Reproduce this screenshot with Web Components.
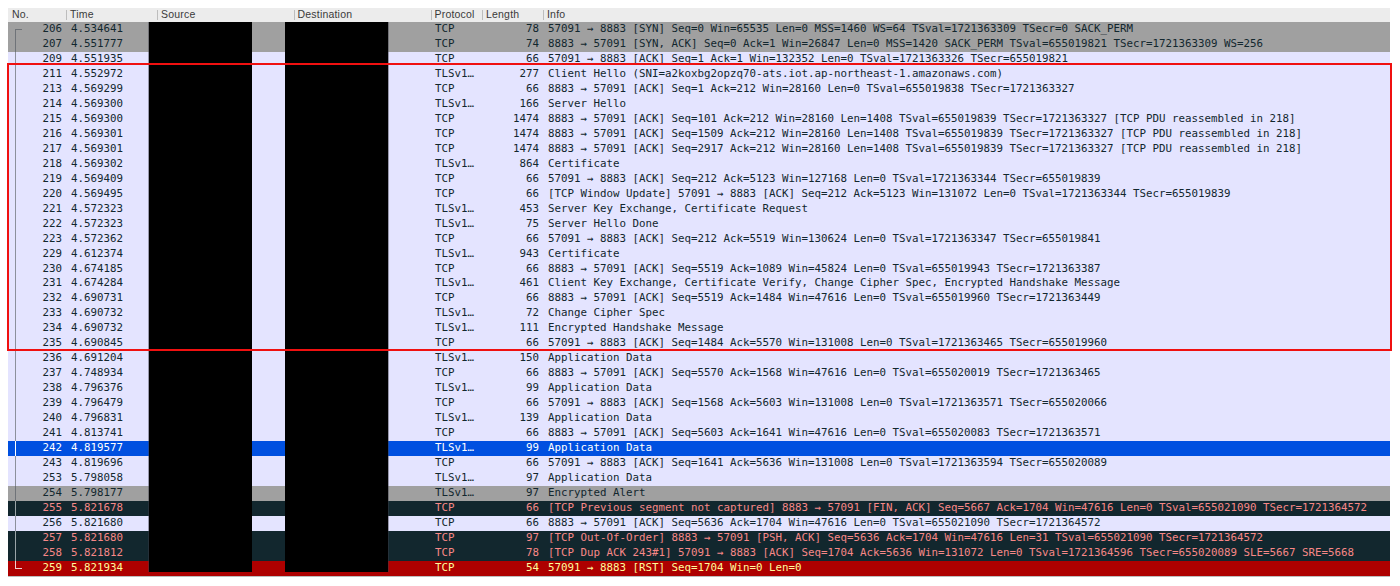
<!DOCTYPE html>
<html>
<head>
<meta charset="utf-8">
<title>Packet list</title>
<style>
  html, body { background: #fff; }
  body { margin: 0; }
</style>
</head>
<body>
<packet-list></packet-list>

<script>
const COLUMNS = '58px 91px 136.5px 137px 51.5px 61px 1fr';

const PACKETS = [
  ['206', '4.534641', 'TCP', '78', '57091 → 8883 [SYN] Seq=0 Win=65535 Len=0 MSS=1460 WS=64 TSval=1721363309 TSecr=0 SACK_PERM', 'syn', 'first'],
  ['207', '4.551777', 'TCP', '74', '8883 → 57091 [SYN, ACK] Seq=0 Ack=1 Win=26847 Len=0 MSS=1420 SACK_PERM TSval=655019821 TSecr=1721363309 WS=256', 'syn'],
  ['209', '4.551935', 'TCP', '66', '57091 → 8883 [ACK] Seq=1 Ack=1 Win=132352 Len=0 TSval=1721363326 TSecr=655019821'],
  ['211', '4.552972', 'TLSv1…', '277', 'Client Hello (SNI=a2koxbg2opzq70-ats.iot.ap-northeast-1.amazonaws.com)'],
  ['213', '4.569299', 'TCP', '66', '8883 → 57091 [ACK] Seq=1 Ack=212 Win=28160 Len=0 TSval=655019838 TSecr=1721363327'],
  ['214', '4.569300', 'TLSv1…', '166', 'Server Hello'],
  ['215', '4.569300', 'TCP', '1474', '8883 → 57091 [ACK] Seq=101 Ack=212 Win=28160 Len=1408 TSval=655019839 TSecr=1721363327 [TCP PDU reassembled in 218]'],
  ['216', '4.569301', 'TCP', '1474', '8883 → 57091 [ACK] Seq=1509 Ack=212 Win=28160 Len=1408 TSval=655019839 TSecr=1721363327 [TCP PDU reassembled in 218]'],
  ['217', '4.569301', 'TCP', '1474', '8883 → 57091 [ACK] Seq=2917 Ack=212 Win=28160 Len=1408 TSval=655019839 TSecr=1721363327 [TCP PDU reassembled in 218]'],
  ['218', '4.569302', 'TLSv1…', '864', 'Certificate'],
  ['219', '4.569409', 'TCP', '66', '57091 → 8883 [ACK] Seq=212 Ack=5123 Win=127168 Len=0 TSval=1721363344 TSecr=655019839'],
  ['220', '4.569495', 'TCP', '66', '[TCP Window Update] 57091 → 8883 [ACK] Seq=212 Ack=5123 Win=131072 Len=0 TSval=1721363344 TSecr=655019839'],
  ['221', '4.572323', 'TLSv1…', '453', 'Server Key Exchange, Certificate Request'],
  ['222', '4.572323', 'TLSv1…', '75', 'Server Hello Done'],
  ['223', '4.572362', 'TCP', '66', '57091 → 8883 [ACK] Seq=212 Ack=5519 Win=130624 Len=0 TSval=1721363347 TSecr=655019841'],
  ['229', '4.612374', 'TLSv1…', '943', 'Certificate'],
  ['230', '4.674185', 'TCP', '66', '8883 → 57091 [ACK] Seq=5519 Ack=1089 Win=45824 Len=0 TSval=655019943 TSecr=1721363387'],
  ['231', '4.674284', 'TLSv1…', '461', 'Client Key Exchange, Certificate Verify, Change Cipher Spec, Encrypted Handshake Message'],
  ['232', '4.690731', 'TCP', '66', '8883 → 57091 [ACK] Seq=5519 Ack=1484 Win=47616 Len=0 TSval=655019960 TSecr=1721363449'],
  ['233', '4.690732', 'TLSv1…', '72', 'Change Cipher Spec'],
  ['234', '4.690732', 'TLSv1…', '111', 'Encrypted Handshake Message'],
  ['235', '4.690845', 'TCP', '66', '57091 → 8883 [ACK] Seq=1484 Ack=5570 Win=131008 Len=0 TSval=1721363465 TSecr=655019960'],
  ['236', '4.691204', 'TLSv1…', '150', 'Application Data'],
  ['237', '4.748934', 'TCP', '66', '8883 → 57091 [ACK] Seq=5570 Ack=1568 Win=47616 Len=0 TSval=655020019 TSecr=1721363465'],
  ['238', '4.796376', 'TLSv1…', '99', 'Application Data'],
  ['239', '4.796479', 'TCP', '66', '57091 → 8883 [ACK] Seq=1568 Ack=5603 Win=131008 Len=0 TSval=1721363571 TSecr=655020066'],
  ['240', '4.796831', 'TLSv1…', '139', 'Application Data'],
  ['241', '4.813741', 'TCP', '66', '8883 → 57091 [ACK] Seq=5603 Ack=1641 Win=47616 Len=0 TSval=655020083 TSecr=1721363571'],
  ['242', '4.819577', 'TLSv1…', '99', 'Application Data', 'selected'],
  ['243', '4.819696', 'TCP', '66', '57091 → 8883 [ACK] Seq=1641 Ack=5636 Win=131008 Len=0 TSval=1721363594 TSecr=655020089'],
  ['253', '5.798058', 'TLSv1…', '97', 'Application Data'],
  ['254', '5.798177', 'TLSv1…', '97', 'Encrypted Alert', 'syn'],
  ['255', '5.821678', 'TCP', '66', '[TCP Previous segment not captured] 8883 → 57091 [FIN, ACK] Seq=5667 Ack=1704 Win=47616 Len=0 TSval=655021090 TSecr=1721364572', 'bad'],
  ['256', '5.821680', 'TCP', '66', '8883 → 57091 [ACK] Seq=5636 Ack=1704 Win=47616 Len=0 TSval=655021090 TSecr=1721364572'],
  ['257', '5.821680', 'TCP', '97', '[TCP Out-Of-Order] 8883 → 57091 [PSH, ACK] Seq=5636 Ack=1704 Win=47616 Len=31 TSval=655021090 TSecr=1721364572', 'bad'],
  ['258', '5.821812', 'TCP', '78', '[TCP Dup ACK 243#1] 57091 → 8883 [ACK] Seq=1704 Ack=5636 Win=131072 Len=0 TSval=1721364596 TSecr=655020089 SLE=5667 SRE=5668', 'bad'],
  ['259', '5.821934', 'TCP', '54', '57091 → 8883 [RST] Seq=1704 Win=0 Len=0', 'rst', 'last']
];

class PacketHeader extends HTMLElement {
  constructor() {
    super();
    this.attachShadow({mode: 'open'}).innerHTML = `
      <style>
        :host {
          display: grid;
          grid-template-columns: ${COLUMNS};
          height: 14px;
          background: #ececec;
          font: 10.5px/13px "Liberation Sans", Arial, sans-serif;
          letter-spacing: 0.2px;
          color: #3a3a3a;
        }
        div { padding-left: 4px; position: relative; white-space: nowrap; }
        div + div::before {
          content: '';
          position: absolute;
          left: 0; top: 2px; bottom: 2px;
          width: 1px;
          background: #bdbdbd;
        }
      </style>
      <div>No.</div><div>Time</div><div>Source</div><div>Destination</div>
      <div>Protocol</div><div>Length</div><div>Info</div>`;
  }
}

class PacketRow extends HTMLElement {
  constructor() {
    super();
    this.attachShadow({mode: 'open'}).innerHTML = `
      <style>
        :host {
          display: grid;
          grid-template-columns: ${COLUMNS};
          position: relative;
          height: 14.97px;
          background: #e4e4ff;
          color: #12272e;
          --tree: #8c909c;
          font: 10.8px/14.97px "DejaVu Sans Mono", monospace;
          white-space: pre;
        }
        :host([kind="syn"]) { background: #a0a0a0; --tree: #6f7378; }
        :host([kind="selected"]) { background: #0050e0; color: #fff; --tree: #fff; }
        :host([kind="bad"]) { background: #12272e; color: #f78787; --tree: #9aa4a8; }
        :host([kind="rst"]) { background: #ae0000; color: #fffc9c; --tree: #f0d0d0; }
        .no { text-align: right; padding-right: 4px; }
        .time { padding-left: 5px; }
        .proto { padding-left: 4.5px; }
        .len { text-align: right; padding-right: 4px; }
        .info { padding-left: 5px; overflow: hidden; }
        .tree { position: absolute; left: 7px; top: 0; bottom: 0; width: 8px; }
        .tree::before {
          content: '';
          position: absolute;
          left: 0; top: 0; bottom: 0;
          width: 1px;
          background: var(--tree);
        }
        :host([tree="first"]) .tree::before { top: 7px; }
        :host([tree="last"]) .tree::before { bottom: 7px; }
        :host([tree="first"]) .tree::after,
        :host([tree="last"]) .tree::after {
          content: '';
          position: absolute;
          left: 0; top: 7px;
          width: 7px; height: 1px;
          background: var(--tree);
        }
      </style>
      <span class="tree"></span>
      <div class="no"></div><div class="time"></div><div></div><div></div>
      <div class="proto"></div><div class="len"></div><div class="info"></div>`;
  }

  set packet(p) {
    const $ = s => this.shadowRoot.querySelector(s);
    $('.no').textContent = p[0];
    $('.time').textContent = p[1];
    $('.proto').textContent = p[2];
    $('.len').textContent = p[3];
    $('.info').textContent = p[4];
    if (p[5]) this.setAttribute('kind', p[5]);
    if (p[6]) this.setAttribute('tree', p[6]);
  }
}

class PacketList extends HTMLElement {
  constructor() {
    super();
    this.attachShadow({mode: 'open'}).innerHTML = `
      <style>
        :host { display: block; position: relative; padding: 8px 10px 0 8px; }
        .rows { border-bottom: 1px solid #bcbcbc; }
        /* black bars over the addresses */
        .redact { position: absolute; top: 22px; height: 550px; background: #000; }
        .src { left: 148.5px; width: 103.5px; box-shadow: -1px 0 0 rgba(60, 60, 70, .45); }
        .dst { left: 285px; width: 103px; box-shadow: 1px 0 0 rgba(60, 60, 70, .45); }
        /* red highlight drawn over the handshake rows */
        .frame {
          position: absolute;
          box-sizing: border-box;
          left: 7px; top: 63px;
          width: 1385px; height: 288px;
          border: 2px solid #f01010;
        }
      </style>
      <packet-header></packet-header>
      <div class="rows"></div>
      <div class="redact src"></div>
      <div class="redact dst"></div>
      <div class="frame"></div>`;
    const rows = this.shadowRoot.querySelector('.rows');
    PACKETS.forEach(p => {
      const row = document.createElement('packet-row');
      row.packet = p;
      if (!p[6]) row.setAttribute('tree', 'mid');
      rows.appendChild(row);
    });
  }
}

customElements.define('packet-header', PacketHeader);
customElements.define('packet-row', PacketRow);
customElements.define('packet-list', PacketList);
</script>
</body>
</html>
